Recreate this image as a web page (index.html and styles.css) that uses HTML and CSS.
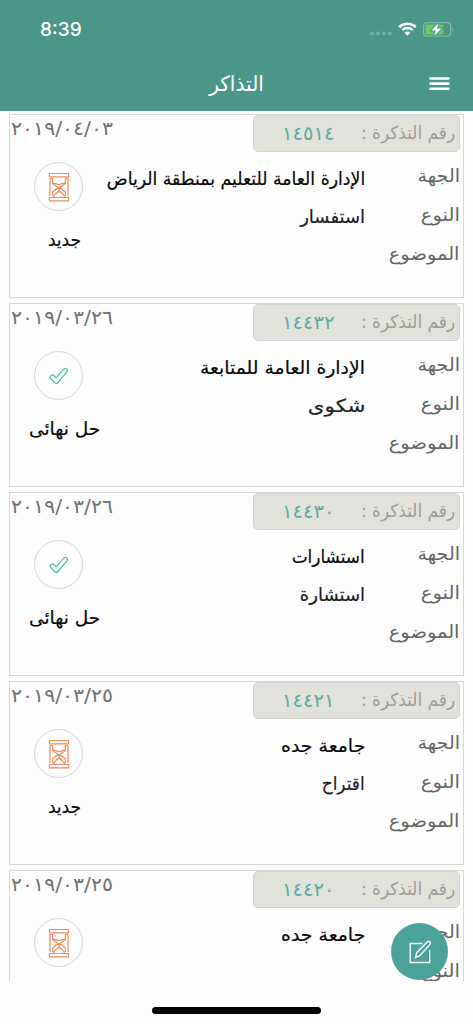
FILE: index.html
```html
<!DOCTYPE html>
<html lang="ar">
<head>
<meta charset="utf-8">
<title>التذاكر</title>
<link rel="stylesheet" href="styles.css">
</head>
<body>
<svg class="defs" width="0" height="0">
  <symbol id="hourglass" viewBox="0 0 22 30">
    <path d="M1.500 1.500h19v3.300h-19zM1.500 25.500h19v3.300h-19zM2 6.500v17.500M4.700 6.500v5.200l5.500 3.800-5.500 4.300v4.200M20 6.500v17.500M17.300 6.500v5.200l-5.500 3.800 5.500 4.300v4.200M4.700 11.600c3-.9 4 .9 6.300.9s3.300-1.800 6.300-.9M11 15.500v3.500M5.500 25c.8-3.200 2.500-3 5.500-6 3 3 4.700 2.800 5.500 6M2 6.500h2.700M17.300 6.500H20"/>
  </symbol>
  <symbol id="check" viewBox="0 0 20 18">
    <path d="M6.200 16L1.900 11.600C-.1 9.400 2.900 6.700 5 8.700l2.300 2.200L14.600 2.200c2-2.100 5.100.3 3.300 2.600L9 15.500c-.9 1-1.900 1.300-2.800.5z"/>
  </symbol>
</svg>
<header class="header">
  <div class="statusbar">
    <span class="time">8:39</span>
    <div class="indicators">
      <svg class="dots" width="22" height="5" viewBox="0 0 22 5"><circle cx="2.200" cy="2.500" r="2"/><circle cx="8" cy="2.500" r="2"/><circle cx="13.900" cy="2.500" r="2"/><circle cx="19.700" cy="2.500" r="2"/></svg>
      <svg class="wifi" width="19" height="14" viewBox="0 0 19 14"><path class="arc" d="M1.200 5c4.700-4.500 11.900-4.500 16.600 0M4.300 8.200c3-2.800 7.400-2.800 10.400 0"/><path class="dot" d="M6.500 10.700c1.800-1.500 4.200-1.500 6 0l-3 3z"/></svg>
      <svg class="battery" width="31" height="15" viewBox="0 0 31 15"><rect class="case" x=".6" y=".6" width="27" height="13.600" rx="3.500"/><path class="cap" d="M29.300 5.200c1.600.7 1.600 3.700 0 4.400z"/><rect class="level" x="2.400" y="2.400" width="18" height="10" rx="1.500"/><path class="bolt" d="M15.600 1L8.500 8.500h4.400l-1.800 5.500 7.400-7.600h-4.600z"/></svg>
    </div>
  </div>
  <div class="navbar">
    <h1 class="title t">التذاكر</h1>
    <svg class="menu" width="21" height="14" viewBox="0 0 21 14"><path d="M1.500 1.500h18M1.500 6.600h18M1.500 11.800h18"/></svg>
  </div>
</header>
<main class="list">
  <article class="card">
    <div class="side"><time class="date t">٢٠١٩/٠٤/٠٣</time><span class="ring new"><svg width="22" height="30"><use href="#hourglass"/></svg></span><span class="state"><span class="t s-new">جديد</span></span></div>
    <div class="body">
      <div class="chip"><span class="chip-label t">رقم التذكرة :</span><span class="number t">١٤٥١٤</span></div>
      <div class="details">
        <div class="labels"><span class="t l1">الجهة</span><span class="t l2">النوع</span><span class="t l3">الموضوع</span></div>
        <div class="values"><span class="t v-a1">الإدارة العامة للتعليم بمنطقة الرياض</span><span class="t v-b1 soft">استفسار</span></div>
      </div>
    </div>
  </article>
  <article class="card">
    <div class="side"><time class="date t">٢٠١٩/٠٣/٢٦</time><span class="ring done"><svg width="20" height="18"><use href="#check"/></svg></span><span class="state"><span class="t s-done">حل نهائى</span></span></div>
    <div class="body">
      <div class="chip"><span class="chip-label t">رقم التذكرة :</span><span class="number t">١٤٤٣٢</span></div>
      <div class="details">
        <div class="labels"><span class="t l1">الجهة</span><span class="t l2">النوع</span><span class="t l3">الموضوع</span></div>
        <div class="values"><span class="t v-a2">الإدارة العامة للمتابعة</span><span class="t v-b2 soft">شكوى</span></div>
      </div>
    </div>
  </article>
  <article class="card">
    <div class="side"><time class="date t">٢٠١٩/٠٣/٢٦</time><span class="ring done"><svg width="20" height="18"><use href="#check"/></svg></span><span class="state"><span class="t s-done">حل نهائى</span></span></div>
    <div class="body">
      <div class="chip"><span class="chip-label t">رقم التذكرة :</span><span class="number t">١٤٤٣٠</span></div>
      <div class="details">
        <div class="labels"><span class="t l1">الجهة</span><span class="t l2">النوع</span><span class="t l3">الموضوع</span></div>
        <div class="values"><span class="t v-a3">استشارات</span><span class="t v-b3 soft">استشارة</span></div>
      </div>
    </div>
  </article>
  <article class="card">
    <div class="side"><time class="date t">٢٠١٩/٠٣/٢٥</time><span class="ring new"><svg width="22" height="30"><use href="#hourglass"/></svg></span><span class="state"><span class="t s-new">جديد</span></span></div>
    <div class="body">
      <div class="chip"><span class="chip-label t">رقم التذكرة :</span><span class="number t">١٤٤٢١</span></div>
      <div class="details">
        <div class="labels"><span class="t l1">الجهة</span><span class="t l2">النوع</span><span class="t l3">الموضوع</span></div>
        <div class="values"><span class="t v-a4">جامعة جده</span><span class="t v-b4 soft">اقتراح</span></div>
      </div>
    </div>
  </article>
  <article class="card">
    <div class="side"><time class="date t">٢٠١٩/٠٣/٢٥</time><span class="ring new"><svg width="22" height="30"><use href="#hourglass"/></svg></span></div>
    <div class="body">
      <div class="chip"><span class="chip-label t">رقم التذكرة :</span><span class="number t">١٤٤٢٠</span></div>
      <div class="details">
        <div class="labels"><span class="t l1">الجهة</span><span class="t l2">النوع</span></div>
        <div class="values"><span class="t v-a4">جامعة جده</span></div>
      </div>
    </div>
  </article>
</main>
<button class="compose" aria-label="تذكرة جديدة"><svg width="22" height="24" viewBox="0 0 22 24"><path d="M13.500 3.500H1.200v19h19.500V10M6.500 17.500l1.200-4.800L18.200 1.900c1.600-1.600 4.300.8 2.700 2.600L10.800 15.600z"/></svg></button>
<footer class="bottom"><span class="home"></span></footer>
</body>
</html>
```
FILE: styles.css
```css
* { box-sizing: border-box; }
body {
  margin: 0;
  width: 473px;
  height: 1024px;
  overflow: hidden;
  display: flex;
  flex-direction: column;
  position: relative;
  background: #fdfdfd;
  color: #080808;
  font-family: "DejaVu Sans", sans-serif;
  font-size: 18px;
}
.defs { position: absolute; }
svg { fill: none; display: block; }

/* Horizontal fit of Arabic text, set by --fit */
.t {
  display: block;
  white-space: nowrap;
  direction: rtl;
  width: max-content;
  transform: scaleX(var(--fit, 1));
  transform-origin: right center;
}
.l1 { --fit: 1.06; }
.l2 { --fit: 1.09; }
.l3 { --fit: 1.08; }
.v-a1 { --fit: .96; }
.v-a2 { --fit: 1.045; }
.v-b2 { --fit: 1.19; }
.v-a3 { --fit: .94; }
.v-a4 { --fit: 1.05; }
.v-b4 { --fit: .94; }
.s-new { --fit: .95; }
.s-done { --fit: 1.03; }

.header { height: 111px; flex: none; background: #4a978a; color: #fff; }
.statusbar {
  height: 58px;
  padding: 0 19px 0 40px;
  display: flex;
  justify-content: space-between;
  align-items: center;
}
.time { padding-top: 2px; font: 500 19px/24px Inter, sans-serif; }
.indicators { display: flex; align-items: center; }
.dots { fill: #73b0a5; margin: 9px 6px 0 0; }
.wifi { margin-right: 6px; }
.wifi .arc { stroke: #fff; stroke-width: 2.5; }
.wifi .dot { fill: #fff; }
.battery .case { stroke: #80b6ad; stroke-width: 1.2; }
.battery .cap { fill: #80b6ad; }
.battery .level { fill: #65cd5c; }
.battery .bolt { fill: #fff; stroke: #4a978a; stroke-width: 2; paint-order: stroke; }
.navbar {
  height: 51px;
  display: grid;
  grid-template-columns: 1fr auto 1fr;
  align-items: center;
}
.title { --fit: .96; grid-column: 2; margin: 0; font-size: 21px; font-weight: 400; line-height: 28px; transform-origin: center; }
.menu { justify-self: end; margin-right: 23px; stroke: #fff; stroke-width: 2.6; stroke-linecap: round; }

.list {
  height: 870px;
  flex: none;
  overflow: hidden;
  padding: 3px 9px 0;
  display: flex;
  flex-direction: column;
  gap: 5px;
}
.card {
  height: 184px;
  flex: none;
  display: flex;
  justify-content: space-between;
  border: 1px solid #d8d8d8;
}
.side { width: 98px; flex: none; display: flex; flex-direction: column; }
.date {
  --fit: 1.08;
  unicode-bidi: bidi-override;
  direction: ltr;
  transform-origin: left center;
  height: 47px;
  padding-left: 1px;
  font-size: 19px;
  line-height: 26px;
  color: #71716f;
}
.ring {
  width: 49px;
  height: 49px;
  margin-left: 24px;
  border: 1px solid #d6d6d6;
  border-radius: 50%;
  display: grid;
  place-items: center;
}
.new { stroke: #ee8c5b; stroke-width: 1.2; }
.done { stroke: #4dbaa3; stroke-width: 1.2; }
.state { margin: 14px 0 0 10px; width: 90px; display: flex; justify-content: center; line-height: 30px; }
.state .t { transform-origin: center; }
.state, .values { -webkit-text-stroke: .2px currentColor; }

.body { flex: 1; min-width: 0; padding: 0 3px 0 0; display: flex; flex-direction: column; align-items: flex-end; }
.chip {
  width: 207px;
  height: 37px;
  padding: 0 4px 0 28px;
  display: flex;
  flex-direction: row-reverse;
  justify-content: space-between;
  border: 1px solid #d3d4d2;
  border-radius: 5px;
  background: #e2e2dd;
  line-height: 34px;
}
.chip-label { --fit: .94; color: #9c9c98; }
.number {
  --fit: 1.03;
  unicode-bidi: bidi-override;
  direction: ltr;
  transform-origin: left center;
  font-size: 19px;
  color: #5aab9d;
}
.details { display: flex; flex-direction: row-reverse; }
.labels { width: 95px; flex: none; padding: 4px 0 0; color: #666664; }
.labels .t, .values .t { margin-left: auto; line-height: 38px; }
.labels .t { line-height: 39px; }
.values { padding-top: 8px; }
.soft { color: #202020; }

.compose {
  position: absolute;
  left: 391px;
  top: 923px;
  width: 57px;
  height: 57px;
  padding: 0;
  border: 0;
  border-radius: 50%;
  background: #4ba29a;
  stroke: #f4fbfa;
  stroke-width: 1.4;
  display: grid;
  place-items: center;
}
.bottom { flex: 1; display: flex; justify-content: center; padding-top: 26px; }
.home { width: 169px; height: 7px; border-radius: 4px; background: #000; }
```
